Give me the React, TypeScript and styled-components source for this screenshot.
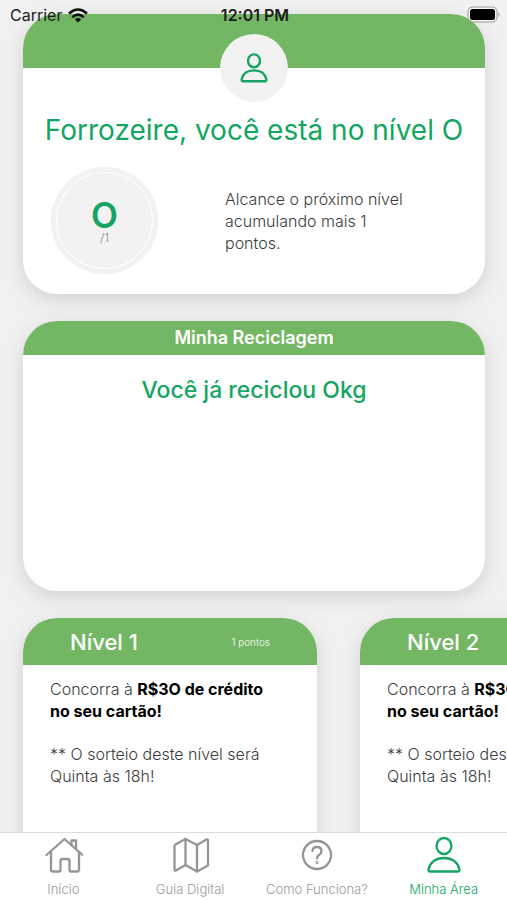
import React from "react";
import styled, { createGlobalStyle } from "styled-components";

const GlobalStyle = createGlobalStyle`
  *, *::before, *::after { box-sizing: border-box; }
  body { margin: 0; background: #f1f1f1; }
`;

const green = "#13a561";
const leaf = "#73b764";
const shadow = "0 6px 20px rgba(0, 0, 0, 0.13)";

const Screen = styled.div`
  position: relative;
  display: flex;
  flex-direction: column;
  height: 100vh;
  background: #f1f1f1;
  font-family: Inter, sans-serif;
  font-weight: 300;
  color: #3c3c3c;
`;

const StatusBar = styled.header`
  position: absolute;
  inset: 0 0 auto;
  z-index: 2;
  display: grid;
  grid-template-columns: 1fr auto 1fr;
  align-items: center;
  height: 30px;
  padding: 0 7px 0 10px;
  font: 400 16px/20px Inter, sans-serif;
  color: #1c1c1c;
`;

const Carrier = styled.span`
  display: flex;
  align-items: center;
  gap: 6px;
`;

const Clock = styled.time`
  font-weight: 600;
`;

const BatteryIcon = styled.svg`
  justify-self: end;
`;

const Content = styled.main`
  flex: 1;
  min-height: 0;
  overflow: hidden;
  display: flex;
  flex-direction: column;
  gap: 27px;
  padding: 14px 22px 0 23px;
`;

const Card = styled.section`
  flex: none;
  border-radius: 34px;
  background: #fff;
  box-shadow: ${shadow};
`;

const CardHeader = styled.div<{ $height: number }>`
  display: flex;
  align-items: center;
  justify-content: center;
  height: ${(p) => p.$height}px;
  border-radius: 34px 34px 0 0;
  background: ${leaf};
  color: #fff;
`;

const Avatar = styled.div`
  display: grid;
  place-items: center;
  width: 68px;
  height: 68px;
  margin: -34px auto 0;
  border-radius: 50%;
  background: #f2f2f2;
`;

const Greeting = styled.h1`
  margin: 11px 0 0;
  font-size: 28px;
  line-height: 34px;
  font-weight: 400;
  text-align: center;
  color: ${green};
`;

const Progress = styled.div`
  display: flex;
  align-items: center;
  gap: 67px;
  padding: 20px 28px;
`;

const Ring = styled.div`
  display: grid;
  place-items: center;
  flex: none;
  width: 107px;
  height: 107px;
  border: 5px solid #f2f2f2;
  border-radius: 50%;
`;

const Dial = styled.div`
  display: flex;
  flex-direction: column;
  align-items: center;
  justify-content: center;
  width: 95px;
  height: 95px;
  padding-top: 4px;
  border-radius: 50%;
  background: #f2f2f2;
`;

const Score = styled.strong`
  font-size: 35px;
  line-height: 30px;
  font-weight: 600;
  color: ${green};
`;

const Goal = styled.span`
  font-size: 12px;
  line-height: 16px;
  color: #8a8a8a;
`;

const Hint = styled.p`
  margin: 0;
  max-width: 184px;
  font-size: 16px;
  line-height: 22px;
`;

const RecycleCard = styled(Card)`
  min-height: 270px;
`;

const HeaderTitle = styled.h2`
  margin: 0;
  font-size: 18px;
  line-height: 24px;
  font-weight: 600;
`;

const Recycled = styled.p`
  margin: 21px 0 0;
  font-size: 23px;
  line-height: 28px;
  font-weight: 500;
  text-align: center;
  color: ${green};
`;

const Levels = styled.div`
  flex: none;
  display: flex;
  gap: 43px;
`;

const LevelCard = styled(Card)`
  flex: none;
  width: 294px;
  min-height: 270px;
`;

const LevelHeader = styled(CardHeader)`
  justify-content: space-between;
  padding: 0 47px;
`;

const LevelTitle = styled.h2`
  margin: 0;
  font-size: 22px;
  line-height: 28px;
  font-weight: 500;
`;

const Points = styled.span`
  font-size: 10px;
  line-height: 16px;
`;

const LevelText = styled.p`
  margin: 0;
  padding: 13px 40px 0 27px;
  font-size: 16px;
  line-height: 22px;

  & + & { padding-top: 21px; }
`;

const Prize = styled.strong`
  font-weight: 700;
  color: #000;
`;

const TabBar = styled.nav`
  position: relative;
  flex: none;
  display: grid;
  grid-template-columns: repeat(4, 1fr);
  height: 68px;
  border-top: 1px solid #dcdcdc;
  background: #fff;
`;

const Tab = styled.a<{ $active?: boolean }>`
  display: flex;
  flex-direction: column;
  align-items: center;
  gap: 6px;
  padding-top: 3px;
  font-size: 13px;
  line-height: 18px;
  white-space: nowrap;
  text-decoration: none;
  color: ${(p) => (p.$active ? green : "#999")};
`;

const Icon = styled.svg<{ $active?: boolean; $weight: number }>`
  fill: none;
  stroke: ${(p) => (p.$active ? green : "#959595")};
  stroke-width: ${(p) => p.$weight};
  stroke-linecap: round;
  stroke-linejoin: round;
`;

const icons = {
  home: (
    <>
      <path d="M3.500 19 21.500 3l18 16" />
      <path d="M8 16v17.500q0 2 2 2h6q1.500 0 1.500-1.500V25q0-2 2-2h5q2 0 2 2v9q0 1.500 1.500 1.500h6q2 0 2-2V16" />
      <path d="M28.500 8.500V4.500h4.500v8.500" />
    </>
  ),
  map: (
    <>
      <path d="M5.500 8.500 15.500 3 27 9 36.500 3.500q1.500-.5 1.500 1V29.500l-11 6L15.500 29 6 34.500q-1.500.5-1.500-1V10q0-1 1-1.500Z" />
      <path d="M15.500 3v26M27 9v26.500" />
    </>
  ),
  help: (
    <>
      <circle cx="20" cy="19" r="14" />
      <path d="M15.500 15q0-4 4.500-4t4.500 4q0 2.500-2.500 4-2 1.500-2 3.500" />
      <circle cx="20" cy="26.500" r=".5" />
    </>
  ),
};

const person = (
  <>
    <ellipse cx="20" cy="10" rx="7.500" ry="8" />
    <path d="M6 35.500q-1.500 0-1.500-2C6 26 12 22 20 22s14 4 15.500 11.500q0 2-1.500 2Z" />
  </>
);

const tabs = [
  { label: "Início", icon: icons.home, active: false },
  { label: "Guia Digital", icon: icons.map, active: false },
  { label: "Como Funciona?", icon: icons.help, active: false },
  { label: "Minha Área", icon: person, active: true },
];

const levels = [
  { name: "Nível 1", points: "1 pontos" },
  { name: "Nível 2", points: "2 pontos" },
];

export default function App() {
  return (
    <Screen>
      <GlobalStyle />
      <StatusBar>
        <Carrier>
          Carrier
          <svg width="20" height="15" viewBox="0 0 20 15" aria-hidden="true">
            <g fill="none" stroke="#111" strokeWidth="2.600">
              <path d="M1 5.500Q10-2.500 19 5.500" />
              <path d="M4.300 9.200Q10 4.200 15.700 9.200" />
            </g>
            <path d="M6.800 11.200Q10 8.800 13.200 11.200L10 14.500Z" fill="#111" />
          </svg>
        </Carrier>
        <Clock>12:01 PM</Clock>
        <BatteryIcon width="33" height="18" viewBox="0 0 33 18" aria-hidden="true">
          <rect x="1" y="1" width="29" height="15" rx="4.500" fill="#fff" fillOpacity="0.35" stroke="#969696" />
          <rect x="3" y="3" width="25" height="11" rx="2.500" fill="#000" />
          <path d="M31.500 6q2 2.500 0 5Z" fill="#969696" />
        </BatteryIcon>
      </StatusBar>

      <Content>
        <Card>
          <CardHeader $height={54} />
          <Avatar>
            <Icon $active $weight={3} width="32" height="32" viewBox="0 0 40 38" aria-hidden="true">
              {person}
            </Icon>
          </Avatar>
          <Greeting>Forrozeire, você está no nível O</Greeting>
          <Progress>
            <Ring>
              <Dial>
                <Score>O</Score>
                <Goal>/1</Goal>
              </Dial>
            </Ring>
            <Hint>Alcance o próximo nível acumulando mais 1 pontos.</Hint>
          </Progress>
        </Card>

        <RecycleCard>
          <CardHeader $height={34}>
            <HeaderTitle>Minha Reciclagem</HeaderTitle>
          </CardHeader>
          <Recycled>Você já reciclou Okg</Recycled>
        </RecycleCard>

        <Levels>
          {levels.map((level) => (
            <LevelCard key={level.name} as="article">
              <LevelHeader $height={47}>
                <LevelTitle>{level.name}</LevelTitle>
                <Points>{level.points}</Points>
              </LevelHeader>
              <LevelText>
                Concorra à <Prize>R$3O de crédito no seu cartão!</Prize>
              </LevelText>
              <LevelText>** O sorteio deste nível será Quinta às 18h!</LevelText>
            </LevelCard>
          ))}
        </Levels>
      </Content>

      <TabBar>
        {tabs.map((tab) => (
          <Tab key={tab.label} href="#" $active={tab.active} aria-current={tab.active ? "page" : undefined}>
            <Icon $active={tab.active} $weight={2.3} width="40" height="38" viewBox="0 0 40 38" aria-hidden="true">
              {tab.icon}
            </Icon>
            {tab.label}
          </Tab>
        ))}
      </TabBar>
    </Screen>
  );
}
